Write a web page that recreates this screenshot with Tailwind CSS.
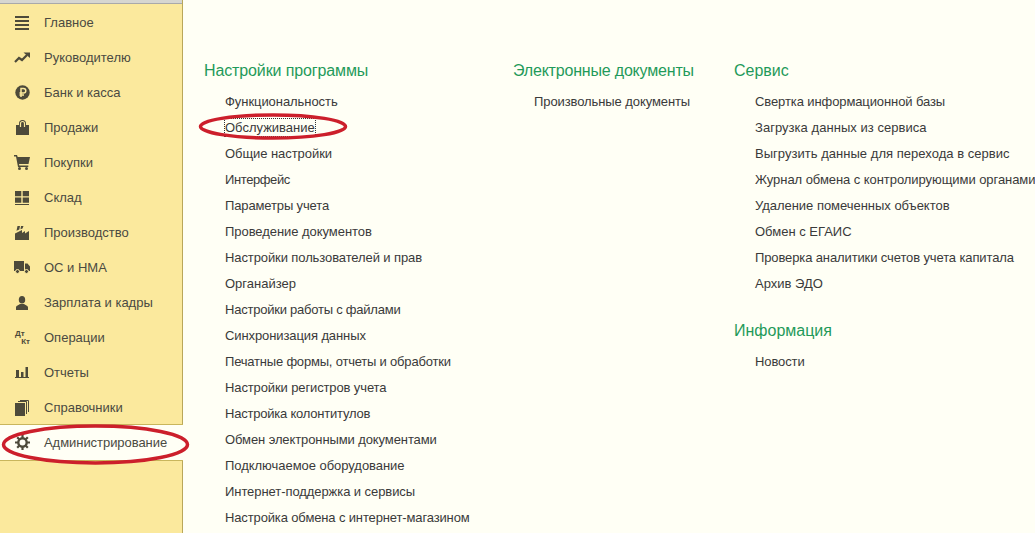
<!DOCTYPE html>
<html>

<head>
    <meta charset="utf-8">
    <title>Администрирование</title>
    <script src="https://cdn.jsdelivr.net/npm/@tailwindcss/browser@4"></script>
</head>

<body class="bg-[#fffff5]">
    <div class="relative w-[1035px] h-[533px] overflow-hidden flex font-['Liberation_Sans',Arial,sans-serif] text-[13px] text-[#3a3a3a]">

        <!-- SIDEBAR -->
        <aside class="w-[183px] shrink-0 h-full bg-[#fbe99d] border-r border-[#b9a75a]">
            <div class="h-1 bg-[#d6d6d0] border-b border-[#a9a9a9]"></div>
            <ul class="pt-[1px] text-[#4a4a42]">
                <li class="h-[35px] flex items-center">
                    <svg class="ml-[15px] w-[15px] h-[15px] shrink-0" viewBox="0 0 15 15" fill="#4d4a3a"><path d="M0 1h14v2H0zM0 5h14v2H0zM0 9h14v2H0zM0 13h14v2H0z"/></svg>
                    <span class="ml-[14px]">Главное</span>
                </li>
                <li class="h-[35px] flex items-center">
                    <svg class="ml-[14px] w-[16px] h-[15px] shrink-0" viewBox="0 0 16 15" fill="none" stroke="#4d4a3a" stroke-width="2.200"><path d="M1 12l4-4 3 2 5-5"/><path fill="#4d4a3a" stroke="none" d="M9.500 2.500H16V8z"/></svg>
                    <span class="ml-[14px]">Руководителю</span>
                </li>
                <li class="h-[35px] flex items-center">
                    <svg class="ml-[15px] w-[15px] h-[15px] shrink-0" viewBox="0 0 15 15"><circle cx="7.500" cy="7.500" r="7.200" fill="#4d4a3a"/><path d="M6 12V3.500h2.500a2.200 2.200 0 0 1 0 4.600H4.500M4.500 10h4.500" fill="none" stroke="#fbe99d" stroke-width="1.500"/></svg>
                    <span class="ml-[14px]">Банк и касса</span>
                </li>
                <li class="h-[35px] flex items-center">
                    <svg class="ml-[16px] w-[13px] h-[15px] shrink-0" viewBox="0 0 13 15" fill="#4d4a3a"><path d="M0 5h3V3.500a3.500 3.500 0 0 1 7 0V5h3v10H0z"/><path d="M4.500 7V3.500a2 2 0 0 1 4 0V7" fill="none" stroke="#fbe99d" stroke-width="1.200"/></svg>
                    <span class="ml-[15px]">Продажи</span>
                </li>
                <li class="h-[35px] flex items-center">
                    <svg class="ml-[14px] w-[16px] h-[15px] shrink-0" viewBox="0 0 16 15" fill="#4d4a3a"><path d="M0 0h3l.7 2H16l-1.500 7H5l.300 1.500h9V12H4L2 1.500H0z"/><circle cx="5.500" cy="13.500" r="1.500"/><circle cx="12.500" cy="13.500" r="1.500"/></svg>
                    <span class="ml-[14px]">Покупки</span>
                </li>
                <li class="h-[35px] flex items-center">
                    <svg class="ml-[15px] w-[14px] h-[14px] shrink-0" viewBox="0 0 14 14" fill="#4d4a3a"><path d="M0 0h6.300v5.300H0zM7.700 0H14v5.300H7.700zM0 6.500h6.300v5.300H0zM7.700 6.500H14v5.300H7.700zM0 13h14v1H0z"/></svg>
                    <span class="ml-[15px]">Склад</span>
                </li>
                <li class="h-[35px] flex items-center">
                    <svg class="ml-[15px] w-[14px] h-[14px] shrink-0" viewBox="0 0 14 14" fill="#4d4a3a"><path d="M2.500 0H5L4.300 3.500 1.500 4.800zM6 0h2.500L7.500 2.500 5.500 3.300zM0 14V7.500L7 4v3l3-2v2.500L14 5v9z"/></svg>
                    <span class="ml-[15px]">Производство</span>
                </li>
                <li class="h-[35px] flex items-center">
                    <svg class="ml-[14px] w-[16px] h-[13px] shrink-0" viewBox="0 0 16 13" fill="#4d4a3a"><path d="M0 0h10v10H0zM11 2.500h2.500L16 5.500V10h-5z"/><circle cx="3.500" cy="10.500" r="2" stroke="#fbe99d"/><circle cx="12.500" cy="10.500" r="2" stroke="#fbe99d"/></svg>
                    <span class="ml-[14px]">ОС и НМА</span>
                </li>
                <li class="h-[35px] flex items-center">
                    <svg class="ml-[16px] w-[12px] h-[14px] shrink-0" viewBox="0 0 12 14" fill="#4d4a3a"><ellipse cx="6" cy="3.800" rx="3.200" ry="3.800"/><path d="M0 14v-2.500C0 9.500 3 9 4 8h4c1 1 4 1.500 4 3.500V14z"/></svg>
                    <span class="ml-[16px]">Зарплата и кадры</span>
                </li>
                <li class="h-[35px] flex items-center">
                    <span class="ml-[15px] w-[15px] h-[16px] shrink-0 flex flex-col font-bold text-[8px] leading-[8px] text-[#4d4a3a]"><span>Дт</span><span class="self-end">Кт</span></span>
                    <span class="ml-[14px]">Операции</span>
                </li>
                <li class="h-[35px] flex items-center">
                    <svg class="ml-[15px] w-[14px] h-[11px] shrink-0" viewBox="0 0 14 11" fill="#4d4a3a"><path d="M1 3h3v7H1zM6 5h2.500v5H6zM10.500 0H13v10h-2.500zM0 10h14v1H0z"/></svg>
                    <span class="ml-[15px]">Отчеты</span>
                </li>
                <li class="h-[35px] flex items-center">
                    <svg class="ml-[15px] w-[14px] h-[16px] shrink-0" viewBox="0 0 14 16" fill="#4d4a3a"><path d="M0 3h10v13H0z"/><path d="M3 1.500h8.500V14M5 .5h8.500V12" fill="none" stroke="#4d4a3a"/></svg>
                    <span class="ml-[15px]">Справочники</span>
                </li>
                <li class="h-[37px] -mt-px flex items-center bg-[#fffff5] border-y border-[#c9b65c] -mr-[1px]">
                    <svg class="ml-[15px] w-[15px] h-[15px] shrink-0" viewBox="0 0 15 15" fill="none" stroke="#4d4a3a"><circle cx="7.500" cy="7.500" r="4.200" stroke-width="2.400"/><path stroke-width="2.200" d="M7.500 0v3M7.500 12v3M0 7.500h3M12 7.500h3M2.200 2.200l2 2M10.800 10.800l2 2M12.800 2.200l-2 2M4.200 10.800l-2 2"/></svg>
                    <span class="ml-[14px] tracking-[-0.05px]">Администрирование</span>
                </li>
            </ul>
        </aside>

        <!-- SECTIONS -->
        <main class="flex pt-[61px] pl-[21px] leading-[26px]">
            <section class="w-[309px] shrink-0">
                <h3 class="text-[16px] leading-[20px] tracking-[-0.12px] text-[#1f9a5a] mb-[8px]">Настройки программы</h3>
                <ul class="pl-[21px]">
                    <li class="tracking-[-0.06px]">Функциональность</li>
                    <li><span class="inline-block leading-[17px] outline-1 outline-dotted outline-[#333]">Обслуживание</span></li>
                    <li class="tracking-[-0.06px]">Общие настройки</li>
                    <li class="tracking-[-0.4px]">Интерфейс</li>
                    <li class="tracking-[-0.13px]">Параметры учета</li>
                    <li class="tracking-[-0.05px]">Проведение документов</li>
                    <li class="tracking-[-0.1px]">Настройки пользователей и прав</li>
                    <li>Органайзер</li>
                    <li class="tracking-[-0.23px]">Настройки работы с файлами</li>
                    <li class="tracking-[-0.1px]">Синхронизация данных</li>
                    <li class="tracking-[-0.2px]">Печатные формы, отчеты и обработки</li>
                    <li class="tracking-[-0.12px]">Настройки регистров учета</li>
                    <li class="tracking-[-0.22px]">Настройка колонтитулов</li>
                    <li class="tracking-[-0.1px]">Обмен электронными документами</li>
                    <li class="tracking-[-0.04px]">Подключаемое оборудование</li>
                    <li class="tracking-[-0.07px]">Интернет-поддержка и сервисы</li>
                    <li class="tracking-[-0.135px]">Настройка обмена с интернет-магазином</li>
                </ul>
            </section>
            <section class="w-[221px] shrink-0">
                <h3 class="text-[16px] leading-[20px] tracking-[-0.19px] text-[#1f9a5a] mb-[8px]">Электронные документы</h3>
                <ul class="pl-[21px]">
                    <li class="tracking-[-0.09px]">Произвольные документы</li>
                </ul>
            </section>
            <section class="shrink-0">
                <h3 class="text-[16px] leading-[20px] text-[#1f9a5a] mb-[8px]">Сервис</h3>
                <ul class="pl-[21px]">
                    <li class="tracking-[-0.1px]">Свертка информационной базы</li>
                    <li class="tracking-[0.04px]">Загрузка данных из сервиса</li>
                    <li class="tracking-[0.03px]">Выгрузить данные для перехода в сервис</li>
                    <li class="tracking-[-0.06px]">Журнал обмена с контролирующими органами</li>
                    <li class="tracking-[-0.03px]">Удаление помеченных объектов</li>
                    <li>Обмен с ЕГАИС</li>
                    <li class="tracking-[-0.12px]">Проверка аналитики счетов учета капитала</li>
                    <li>Архив ЭДО</li>
                </ul>
                <h3 class="text-[16px] leading-[20px] text-[#1f9a5a] mt-[24px] mb-[8px]">Информация</h3>
                <ul class="pl-[21px]">
                    <li class="tracking-[-0.1px]">Новости</li>
                </ul>
            </section>
        </main>

        <!-- red hand-drawn ellipses over the screenshot -->
        <svg class="absolute left-0 top-0 w-[1035px] h-[533px] pointer-events-none" viewBox="0 0 1035 533" fill="none" stroke="#cc1f2b" stroke-width="3.500">
            <ellipse cx="95.500" cy="444.500" rx="92" ry="18.500"/>
            <ellipse cx="273" cy="126.500" rx="72.500" ry="11.500"/>
        </svg>
    </div>
</body>

</html>
